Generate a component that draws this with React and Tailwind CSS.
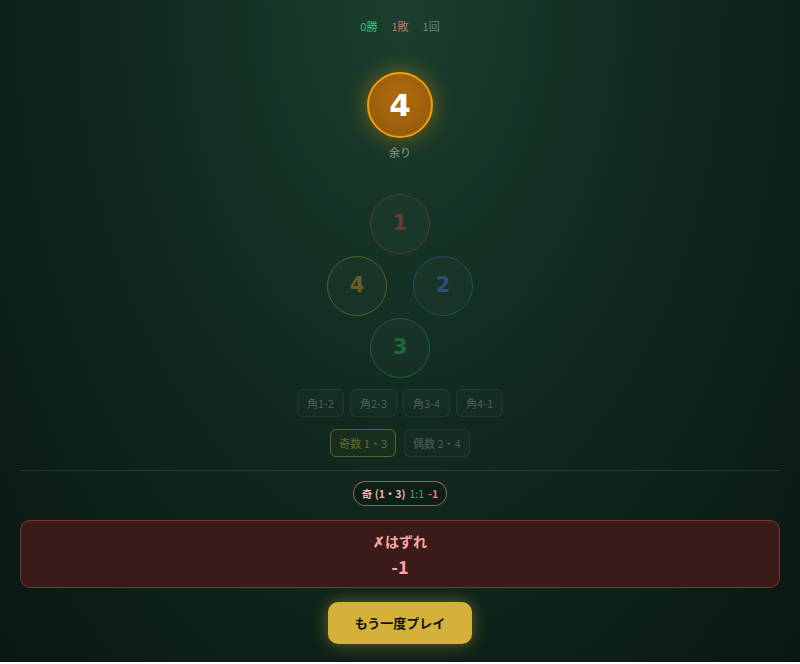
import React from "react";

const font = { fontFamily: '"Noto Sans CJK JP", "Noto Sans", sans-serif' };
const numFont = { fontFamily: '"DejaVu Sans", "Noto Sans", sans-serif' };

function NumCircle({ n, ring, text }) {
    return (
        <div
            style={numFont}
            className={`flex h-[60px] w-[60px] items-center justify-center rounded-full border-[1.5px] bg-white/[0.05] text-[21px] font-bold ${ring} ${text}`}
        >
            {n}
        </div>
    );
}

function BetButton({ label, active, wide }) {
    return (
        <button
            className={`h-[28px] rounded-md border text-[11px] ${wide ? "px-[9px]" : "px-2"} ${
                active
                    ? "border-[#c9b93a] bg-[#c9b93a]/10 text-[#d8c84a]"
                    : "border-white/15 bg-white/[0.04] text-white/60"
            }`}
        >
            {label}
        </button>
    );
}

export default function App() {
    return (
        <div
            style={font}
            className="flex w-full flex-col items-center bg-[radial-gradient(ellipse_at_50%_0%,#1b3f2e_0%,#112a1f_45%,#0a1812_100%)] px-5 pb-[18px] pt-[18px]"
        >
            <div className="flex h-4 items-center gap-[14px] text-[11px] leading-4">
                <span className="text-[#3fbf83]">0勝</span>
                <span className="text-[#c7776d]">1敗</span>
                <span className="text-[#6f8077]">1回</span>
            </div>

            <div
                style={numFont}
                className="mt-[38px] flex h-[66px] w-[66px] items-center justify-center rounded-full border-2 border-[#f59e0b] bg-[radial-gradient(circle_at_50%_40%,#b06d0c_0%,#8e560a_100%)] text-[31px] font-bold text-white shadow-[0_0_22px_rgba(245,158,11,0.45)]"
            >
                4
            </div>
            <div className="mt-[6px] text-[11px] leading-4 text-[#8a9a90]">余り</div>

            <div className="mt-[34px] flex flex-col items-center opacity-40">
                <div className="flex flex-col items-center gap-[2px]">
                    <NumCircle n="1" ring="border-[#b04848]" text="text-[#e04848]" />
                    <div className="flex gap-[26px]">
                        <NumCircle n="4" ring="border-[#c9a020]" text="text-[#e0a820]" />
                        <NumCircle n="2" ring="border-[#3f6fd0]" text="text-[#4f7ff0]" />
                    </div>
                    <NumCircle n="3" ring="border-[#30a860]" text="text-[#30c060]" />
                </div>

                <div className="mt-[11px] flex gap-[6px]">
                    <BetButton label="角1-2" wide />
                    <BetButton label="角2-3" wide />
                    <BetButton label="角3-4" wide />
                    <BetButton label="角4-1" wide />
                </div>
                <div className="mt-[12px] flex gap-[8px]">
                    <BetButton label="奇数 1・3" active />
                    <BetButton label="偶数 2・4" />
                </div>
            </div>

            <div className="mt-[13px] h-px w-full bg-white/10" />

            <div className="mt-[10px] flex h-[25px] items-center gap-1 rounded-full border border-[#c98080]/70 bg-black/20 px-2 text-[10.5px]">
                <span className="font-semibold text-[#f3b0a8]">奇 (1・3)</span>
                <span className="text-[#6f9585]">1:1</span>
                <span className="font-bold text-[#f87171]">-1</span>
            </div>

            <div className="mt-[14px] flex h-[68px] w-full flex-col items-center justify-center rounded-[10px] border border-[#7a3530] bg-[#3a1b19]">
                <div className="text-[14px] font-bold leading-5 text-[#fca5a5]">✗はずれ</div>
                <div className="mt-[3px] text-[18px] font-bold leading-6 text-[#fca5a5]">-1</div>
            </div>

            <button className="mt-[14px] h-[42px] w-[144px] rounded-[10px] bg-[#d4b13a] text-[13px] font-bold text-[#111] shadow-[0_0_16px_rgba(212,177,58,0.45)]">
                もう一度プレイ
            </button>
        </div>
    );
}
